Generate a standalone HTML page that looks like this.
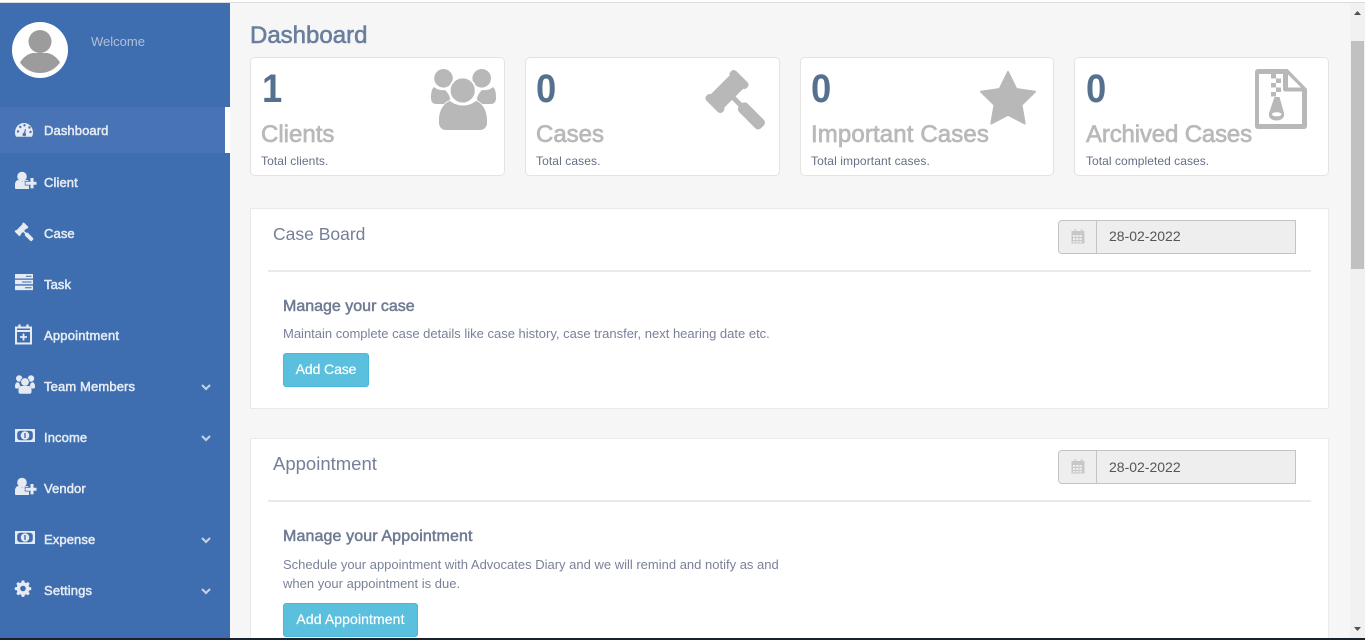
<!DOCTYPE html>
<html lang="en">
<head>
<meta charset="utf-8">
<title>Dashboard</title>
<style>
html,body{margin:0;padding:0;width:1365px;height:640px;overflow:hidden;background:#f6f6f6;font-family:"Liberation Sans",sans-serif}
#wrap{position:absolute;left:0;top:0;width:1365px;height:640px;overflow:hidden}
.abs,.t{position:absolute}
.t{white-space:nowrap;line-height:1}
#top{left:0;top:0;width:1365px;height:3px;background:#fff}
#topline{left:0;top:2px;width:1365px;height:1px;background:#dcdcdc}
#bottom{left:0;top:638px;width:1365px;height:2px;background:#1a222c}
#side{left:0;top:3px;width:230px;height:635px;background:#3e6eb0}
#active{left:0;top:107px;width:225px;height:46px;background:#4873b5}
#activebar{left:225px;top:107px;width:5px;height:46px;background:#fff}
.nav{left:44px;font-size:13px;color:#e6ebf3;-webkit-text-stroke:.5px #e6ebf3;letter-spacing:.1px}
.card{background:#fff;border:1px solid #e3e3e3;border-radius:5px;box-sizing:border-box;top:57px;height:119px}
.num{top:69px;font-size:40px;font-weight:700;color:#56708f;transform:scaleX(.91);transform-origin:0 0}
.lab{top:123px;font-size:24px;color:#bab8b8;-webkit-text-stroke:.7px #bab8b8}
.sub{top:155px;font-size:12px;color:#666f85;letter-spacing:.1px}
.panel{background:#fff;border:1px solid #e7eaef;box-sizing:border-box;left:250px;width:1079px}
.rule{left:268px;width:1043px;height:2px;background:#e7eaef}
.h{font-size:17.5px;color:#757f98;left:273px}
.m{font-size:16px;color:#6f7b93;left:283px;-webkit-text-stroke:.5px #6f7b93}
.d{font-size:13px;color:#7a8299;left:283px}
.btn{left:283px;height:34px;background:#5bc0de;border:1px solid #46b8da;border-radius:3px;box-sizing:border-box;color:#fff;font-size:14px;line-height:30px;text-align:center;-webkit-text-stroke:.2px #fff}
.addon{left:1058px;width:39px;height:34px;background:#eee;border:1px solid #c4c4c4;border-radius:4px 0 0 4px;box-sizing:border-box}
.inp{left:1097px;width:199px;height:34px;background:#eee;border:1px solid #c4c4c4;border-left:0;box-sizing:border-box}
.date{left:1109px;font-size:14px;color:#555}
#sb{left:1350px;top:3px;width:15px;height:635px;background:#f1f1f1}
#th{left:1351px;top:41px;width:13px;height:228px;background:#c1c1c1}
svg{position:absolute;left:0;top:0}
</style>
</head>
<body>
<div id="wrap">
<div class="abs" id="top"></div>
<div class="abs" id="topline"></div>
<div class="abs" id="side"></div>
<div class="abs" id="active"></div>
<div class="abs" id="activebar"></div>
<div class="abs" id="sb"></div>
<div class="abs" id="th"></div>

<div class="t" style="left:91px;top:35px;font-size:13px;color:#b4bfd2">Welcome</div>
<div class="t nav" style="top:124px">Dashboard</div>
<div class="t nav" style="top:176px">Client</div>
<div class="t nav" style="top:227px">Case</div>
<div class="t nav" style="top:278px">Task</div>
<div class="t nav" style="top:329px;letter-spacing:.2px">Appointment</div>
<div class="t nav" style="top:380px;letter-spacing:.13px">Team Members</div>
<div class="t nav" style="top:431px">Income</div>
<div class="t nav" style="top:482px">Vendor</div>
<div class="t nav" style="top:533px">Expense</div>
<div class="t nav" style="top:584px;letter-spacing:.15px">Settings</div>

<div class="t" style="left:250px;top:24px;font-size:24px;color:#6a7f9e;-webkit-text-stroke:.6px #6a7f9e">Dashboard</div>

<div class="abs card" style="left:250px;width:255px"></div>
<div class="abs card" style="left:525px;width:255px"></div>
<div class="abs card" style="left:800px;width:254px"></div>
<div class="abs card" style="left:1074px;width:255px"></div>

<div class="t num" style="left:262px">1</div>
<div class="t lab" style="left:261px">Clients</div>
<div class="t sub" style="left:261px">Total clients.</div>
<div class="t num" style="left:536px">0</div>
<div class="t lab" style="left:536px">Cases</div>
<div class="t sub" style="left:536px">Total cases.</div>
<div class="t num" style="left:811px">0</div>
<div class="t lab" style="left:811px;letter-spacing:.13px">Important Cases</div>
<div class="t sub" style="left:811px;letter-spacing:.1px">Total important cases.</div>
<div class="t num" style="left:1086px">0</div>
<div class="t lab" style="left:1086px;letter-spacing:-.15px">Archived Cases</div>
<div class="t sub" style="left:1086px;letter-spacing:.05px">Total completed cases.</div>

<div class="abs panel" style="top:208px;height:201px"></div>
<div class="abs rule" style="top:270px"></div>
<div class="t h" style="top:226px">Case Board</div>
<div class="abs addon" style="top:220px"></div>
<div class="abs inp" style="top:220px"></div>
<div class="t date" style="top:229px">28-02-2022</div>
<div class="t m" style="top:299px">Manage your case</div>
<div class="t d" style="top:327px">Maintain complete case details like case history, case transfer, next hearing date etc.</div>
<div class="abs btn" style="top:353px;width:86px;letter-spacing:-.1px">Add Case</div>

<div class="abs panel" style="top:438px;height:201px;border-bottom:0"></div>
<div class="abs rule" style="top:500px"></div>
<div class="t h" style="top:455px;font-size:18.5px">Appointment</div>
<div class="abs addon" style="top:450px"></div>
<div class="abs inp" style="top:450px"></div>
<div class="t date" style="top:460px">28-02-2022</div>
<div class="t m" style="top:529px;letter-spacing:.12px">Manage your Appointment</div>
<div class="t d" style="top:558px">Schedule your appointment with Advocates Diary and we will remind and notify as and</div>
<div class="t d" style="top:577px">when your appointment is due.</div>
<div class="abs btn" style="top:603px;width:135px;letter-spacing:.1px">Add Appointment</div>

<div class="abs" id="bottom"></div>

<svg width="1365" height="640" viewBox="0 0 1365 640">
  <!-- avatar -->
  <circle cx="40" cy="50" r="28" fill="#fff"/>
  <circle cx="40" cy="41.500" r="11.500" fill="#9c9c9c"/>
  <path d="M20 62.500c3-5 8-9 13-9.500h14c5 .5 10 4.500 13 9.500-5 7-12 10.500-20 10.500s-15-3.500-20-10.500z" fill="#9c9c9c"/>

  <g fill="#e6ebf3">
    <!-- dashboard -->
    <path d="M15 132.500a9 9.500 0 0 1 18 0c0 1.500-.4 3-1 4.300H16c-.6-1.300-1-2.800-1-4.300z"/>
    <g fill="#4873b5"><circle cx="18" cy="131.500" r="1.200"/><circle cx="20.300" cy="127" r="1.200"/><circle cx="24.500" cy="125.300" r="1.200"/><circle cx="29.500" cy="127.500" r="1.200"/><circle cx="30.500" cy="132" r="1.200"/><path d="M23.500 134l1.500-5 1 .3-1 5z"/><circle cx="24.300" cy="134.500" r="1.800"/></g>

    <!-- client -->
    <circle cx="22" cy="176.500" r="4.800"/>
    <path d="M15 188v-3.500c0-2.800 1.700-4.500 3.500-4.500l3.500 1.500 4-1.500c1.500 0 2.500.5 3 1.200V189H16c-.6 0-1-.4-1-1z"/>
    <path d="M30.500 178h3v3.700h3v3h-3v3.700h-3v-3.700h-5v-3h5z" stroke="#3e6eb0" stroke-width="1.500" paint-order="stroke"/>

    <!-- case gavel -->
    <g transform="translate(21.500 229.300) rotate(45) scale(.31)">
      <rect x="-9.500" y="-17" width="19" height="34"/>
      <rect x="-11.500" y="-21" width="23" height="8" rx="3"/>
      <rect x="-11.500" y="13" width="23" height="8" rx="3"/>
      <rect x="8" y="-2.500" width="14" height="5"/>
      <rect x="19" y="-6.500" width="31" height="13" rx="4"/>
    </g>

    <!-- task -->
    <path d="M15 274h18v4.500H15zM15 279.800h18v4.500H15zM15 285.600h18v4.500H15z"/>
    <path d="M26 275.700h5.500v1H26zM22 281.500h9.500v1H22zM25 287.300h6.500v1H25z" fill="#3e6eb0"/>

    <!-- team -->
    <circle cx="19.200" cy="378.500" r="3.200"/><circle cx="31" cy="378.500" r="3.200"/>
    <path d="M15 386.500c0-2.500 1-4 2-4.300l2 .5 1.200 3-2 2.800H16c-.6 0-1-.6-1-2zM35 386.500c0-2.500-1-4-2-4.300l-2 .5-1.200 3 2 2.800H34c.6 0 1-.6 1-2z"/>
    <circle cx="25" cy="382" r="4.300" stroke="#3e6eb0" stroke-width=".8"/>
    <path d="M18.500 392v-2.500c0-2.300 1.500-3.500 3-3.500h7c1.500 0 3 1.200 3 3.500v2.500c0 1.200-1 1.800-2 1.800h-9c-1 0-2-.6-2-1.800z"/>

    <!-- vendor -->
    <circle cx="22" cy="482.500" r="4.800"/>
    <path d="M15 494v-3.500c0-2.800 1.700-4.500 3.500-4.500l3.500 1.500 4-1.500c1.500 0 2.500.5 3 1.200V495H16c-.6 0-1-.4-1-1z"/>
    <path d="M30.500 484h3v3.700h3v3h-3v3.700h-3v-3.700h-5v-3h5z" stroke="#3e6eb0" stroke-width="1.500" paint-order="stroke"/>

    <!-- settings -->
    <path fill-rule="evenodd" d="M21.700 581h2.600l.4 2 1.400.6 1.800-1.100 1.800 1.800-1.100 1.800.6 1.400 2 .4v2.600l-2 .4-.6 1.400 1.100 1.800-1.800 1.800-1.800-1.100-1.400.6-.4 2h-2.600l-.4-2-1.400-.6-1.800 1.100-1.800-1.800 1.100-1.800-.6-1.400-2-.4v-2.600l2-.4.6-1.400-1.100-1.800 1.800-1.800 1.800 1.100 1.400-.6zM23 586.200a2.800 2.800 0 1 0 0 5.600 2.800 2.800 0 0 0 0-5.600z" transform="translate(0 -.5)"/>
  </g>

  <!-- appointment -->
  <g fill="none" stroke="#e6ebf3">
    <rect x="16" y="327.500" width="15" height="16" stroke-width="2"/>
    <path d="M19.500 324.500v4M27.500 324.500v4" stroke-width="2.400"/>
    <path d="M16 331h15" stroke-width="2"/>
    <path d="M23.500 333.500v7M20 337h7" stroke-width="1.800"/>
  </g>

  <!-- money icons -->
  <g>
    <rect x="15" y="429" width="20" height="13" fill="#e6ebf3"/>
    <rect x="17.200" y="430.800" width="15.600" height="9.400" rx="3" fill="#3e6eb0"/>
    <circle cx="25" cy="435.500" r="4.300" fill="#e6ebf3"/>
    <rect x="24.300" y="433" width="1.400" height="5" fill="#3e6eb0"/>
    <rect x="15" y="531" width="20" height="13" fill="#e6ebf3"/>
    <rect x="17.200" y="532.800" width="15.600" height="9.400" rx="3" fill="#3e6eb0"/>
    <circle cx="25" cy="537.500" r="4.300" fill="#e6ebf3"/>
    <rect x="24.300" y="535" width="1.400" height="5" fill="#3e6eb0"/>
  </g>

  <!-- chevrons -->
  <g fill="none" stroke="#c3cfe2" stroke-width="2.200">
    <path d="M202 385l4 4 4-4"/>
    <path d="M202 436l4 4 4-4"/>
    <path d="M202 538l4 4 4-4"/>
    <path d="M202 589l4 4 4-4"/>
  </g>

  <!-- big users -->
  <g fill="#b9b8b9">
    <circle cx="443.500" cy="78.300" r="9.300"/>
    <circle cx="481.700" cy="78.300" r="9.300"/>
    <path d="M431 98c0-5 .5-9 3-11 3 2.500 6 3.500 11 3 3 3 5 6 5 10l-4 4h-10c-3 0-5-2-5-6z"/>
    <path d="M496 98c0-5-.5-9-3-11-3 2.500-6 3.500-11 3-3 3-5 6-5 10l4 4h10c3 0 5-2 5-6z"/>
    <circle cx="462.700" cy="90.500" r="13" stroke="#fff" stroke-width="1.800"/>
    <path d="M439 120c0-10 5-17 11-19 4 3 8 4.500 13 4.500s9-1.500 13-4.500c6 2 11 9 11 19v3c0 4-3 7-7 7h-34c-4 0-7-3-7-7z" stroke="#fff" stroke-width="1.800" paint-order="stroke"/>
  </g>

  <!-- big gavel -->
  <g transform="translate(727 91.500) rotate(45)" fill="#b9b8b9">
    <rect x="-9.500" y="-17" width="19" height="34"/>
    <rect x="-11.500" y="-21" width="23" height="8" rx="3.500"/>
    <rect x="-11.500" y="13" width="23" height="8" rx="3.500"/>
    <rect x="8" y="-2.500" width="14" height="5"/>
    <rect x="19" y="-6" width="31" height="12" rx="4"/>
  </g>

  <!-- big star -->
  <path d="M1008 72l8.300 17 18.700 2.700-13.500 13.200 3.200 18.600-16.700-8.800-16.700 8.800 3.200-18.600-13.500-13.200 18.700-2.700z" fill="#b9b8b9" stroke="#b9b8b9" stroke-width="2" stroke-linejoin="round"/>

  <!-- big file zip -->
  <path d="M1258 69h29.500l19.500 20v37c0 1.800-1.200 3-3 3h-46c-1.800 0-3-1.200-3-3V72c0-1.800 1.200-3 3-3z" fill="#b9b8b9"/>
  <path d="M1259 74h24v15c0 1.500 1 2.500 2.500 2.500h16.500V124h-43z" fill="#fff"/>
  <path d="M1288 74.500l13 13h-13z" fill="#fff"/>
  <g fill="#b9b8b9">
    <rect x="1271" y="74" width="5" height="4.500"/><rect x="1276" y="78.500" width="5" height="4.500"/>
    <rect x="1271" y="83" width="5" height="4.500"/><rect x="1276" y="87.500" width="5" height="4.500"/>
    <rect x="1271" y="92" width="5" height="4.500"/>
    <path d="M1274.500 97h5l4.500 16c1 5-3 7.500-7.500 7.500s-8.500-2.500-7.500-7.500z"/>
  </g>
  <ellipse cx="1276.700" cy="114.300" rx="4.800" ry="2" fill="#fff"/>

  <!-- calendars -->
  <g fill="#c8c8c8">
    <path fill-rule="evenodd" d="M1071.500 231h13v12.500h-13zM1073 235v2h2.300v-2zM1076.200 235v2h2.300v-2zM1079.400 235v2h2.300v-2zM1073 238v2h2.300v-2zM1076.200 238v2h2.300v-2zM1079.400 238v2h2.300v-2zM1073 241v1.500h2.300V241zM1076.200 241v1.500h2.300V241zM1079.400 241v1.500h2.300V241z"/>
    <rect x="1074.300" y="229.500" width="1.800" height="3"/><rect x="1080.700" y="229.500" width="1.800" height="3"/>
    <path fill-rule="evenodd" d="M1071.500 461h13v12.500h-13zM1073 465v2h2.300v-2zM1076.200 465v2h2.300v-2zM1079.400 465v2h2.300v-2zM1073 468v2h2.300v-2zM1076.200 468v2h2.300v-2zM1079.400 468v2h2.300v-2zM1073 471v1.500h2.300V471zM1076.200 471v1.500h2.300V471zM1079.400 471v1.500h2.300V471z"/>
    <rect x="1074.300" y="459.500" width="1.800" height="3"/><rect x="1080.700" y="459.500" width="1.800" height="3"/>
  </g>

  <!-- scroll arrows -->
  <path d="M1354 15l3.500-4 3.500 4z" fill="#505050"/>
  <path d="M1354 627l3.500 4 3.500-4z" fill="#505050"/>
</svg>
</div>
</body>
</html>
